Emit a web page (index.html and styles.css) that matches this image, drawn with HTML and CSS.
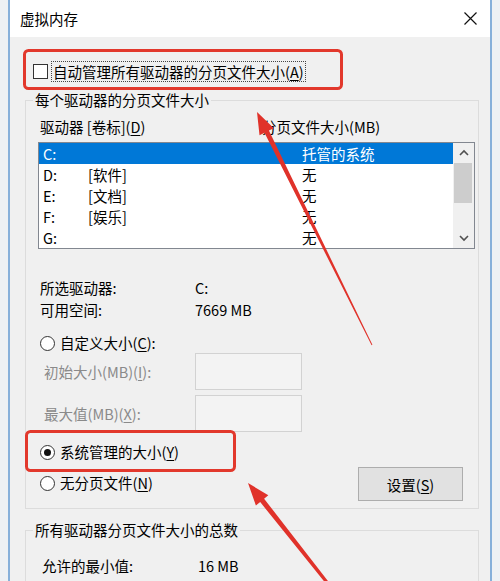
FILE: index.html
```html
<!DOCTYPE html>
<html lang="zh">
<head>
<meta charset="utf-8">
<title>虚拟内存</title>
<link rel="stylesheet" href="styles.css">
</head>
<body>
<div class="window">
  <div class="titlebar">
    <span class="title">虚拟内存</span>
    <svg class="close" width="13" height="13" viewBox="0 0 13 13"><path d="M0.5 0.5L12.5 12.5M12.5 0.5L0.5 12.5" stroke="#111" stroke-width="1.2" fill="none"/></svg>
  </div>
  <div class="auto-row">
    <span class="checkbox"></span>
    <span class="focus">自动管理所有驱动器的分页文件大小(<u>A</u>)</span>
  </div>
  <div class="group g1">
    <div class="group-title">每个驱动器的分页文件大小</div>
    <div class="cols"><span class="h1">驱动器 [卷标](<u>D</u>)</span><span>分页文件大小(MB)</span></div>
    <div class="listbox">
      <div class="rows">
        <div class="row sel"><span class="c1">C:</span><span class="c2"></span><span>托管的系统</span></div>
        <div class="row"><span class="c1">D:</span><span class="c2">[软件]</span><span>无</span></div>
        <div class="row"><span class="c1">E:</span><span class="c2">[文档]</span><span>无</span></div>
        <div class="row"><span class="c1">F:</span><span class="c2">[娱乐]</span><span>无</span></div>
        <div class="row"><span class="c1">G:</span><span class="c2"></span><span>无</span></div>
      </div>
      <div class="scrollbar">
        <div class="sb-btn"><svg width="12" height="12" viewBox="0 0 12 12"><path d="M2 8L6 4L10 8" stroke="#505050" stroke-width="1.6" fill="none"/></svg></div>
        <div class="track"><div class="thumb"></div></div>
        <div class="sb-btn"><svg width="12" height="12" viewBox="0 0 12 12"><path d="M2 4L6 8L10 4" stroke="#505050" stroke-width="1.6" fill="none"/></svg></div>
      </div>
    </div>
    <div class="info">
      <span>所选驱动器:</span><span>C:</span>
      <span>可用空间:</span><span>7669 MB</span>
    </div>
    <div class="radio-row custom"><span class="radio"></span><span>自定义大小(<u>C</u>):</span></div>
    <div class="fields">
      <span class="flabel">初始大小(MB)(<u>I</u>):</span><span class="tb"></span>
      <span class="flabel">最大值(MB)(<u>X</u>):</span><span class="tb"></span>
    </div>
    <div class="bottom">
      <div class="radios">
        <div class="radio-row"><span class="radio on"></span><span>系统管理的大小(<u>Y</u>)</span></div>
        <div class="radio-row"><span class="radio"></span><span>无分页文件(<u>N</u>)</span></div>
      </div>
      <div class="btn">设置(<u>S</u>)</div>
    </div>
  </div>
  <div class="group g2">
    <div class="group-title">所有驱动器分页文件大小的总数</div>
    <div class="total"><span>允许的最小值:</span><span>16 MB</span></div>
  </div>
</div>
<svg class="overlay" width="500" height="581" viewBox="0 0 500 581">
  <rect x="24.5" y="50.5" width="317" height="38" rx="4" fill="none" stroke="#e2382c" stroke-width="3"/>
  <rect x="26.5" y="431.5" width="208" height="39" rx="4" fill="none" stroke="#e2382c" stroke-width="3"/>
  <polygon fill="#e0322a" points="257,112 273.9,128.2 268.9,130.6 372.4,344.8 371.6,345.2 264.5,132.8 259.5,135.2"/>
  <polygon fill="#e0322a" points="248,483 268.3,495.3 264.1,498.7 334.2,589.1 331.8,590.9 260.2,502.1 255.9,505.6"/>
</svg>
</body>
</html>
```

FILE: styles.css
```css
* { box-sizing: border-box; }

html, body { overflow: hidden; }

body {
  margin: 0;
  width: 500px;
  height: 581px;
  position: relative;
  background: #eef1f4;
  font-family: "Noto Sans CJK SC", "Noto Sans", sans-serif;
  font-size: 14.5px;
  color: #000;
}

u { text-underline-offset: 2px; text-decoration-thickness: 1px; }

.window {
  margin-left: 8px;
  width: 484px;
  height: 581px;
  overflow: hidden;
  border-left: 2px solid #87b0da;
  border-right: 2px solid #87b0da;
  background: #f0f0f0;
}

.titlebar {
  height: 37px;
  background: #fff;
  display: flex;
  align-items: center;
  justify-content: space-between;
  padding: 0 13px 0 10px;
}

.title { line-height: 20px; }

.auto-row {
  display: flex;
  align-items: center;
  height: 22px;
  margin: 23px 0 0 23px;
}

.checkbox {
  width: 15px;
  height: 15px;
  border: 1px solid #333;
  background: #fff;
}

.focus {
  margin-left: 3px;
  padding: 0 1px;
  border: 1px dotted #444;
  line-height: 19px;
}

.group {
  margin: 0 11px 0 15px;
  border: 1px solid #dcdcdc;
}

.g1 {
  margin-top: 18px;
  padding-bottom: 7px;
}

.group-title {
  width: fit-content;
  margin: -11px 0 0 7px;
  padding: 0 2px;
  line-height: 20px;
  background: #f0f0f0;
}

.cols {
  display: flex;
  margin-top: 7px;
  padding-left: 14px;
  line-height: 20px;
}

.cols .h1 { width: 222px; }

.listbox {
  margin: 5px 0 0 12px;
  width: 437px;
  height: 107px;
  border: 1px solid #828790;
  background: #fff;
  display: flex;
}

.rows { width: 414px; }

.row {
  height: 21px;
  line-height: 21px;
  display: flex;
  padding-left: 4px;
}

.row.sel { background: #0078d7; color: #fff; }

.c1 { width: 45px; }
.c2 { width: 214px; }

.scrollbar {
  width: 21px;
  display: flex;
  flex-direction: column;
  background: #f0f0f0;
}

.sb-btn {
  height: 20px;
  display: flex;
  align-items: center;
  justify-content: center;
}

.track { flex: 1; }

.thumb {
  margin: 0 2px 0 1px;
  height: 40px;
  background: #cdcdcd;
}

.info {
  display: grid;
  grid-template-columns: 155px auto;
  margin-top: 28px;
  padding-left: 14px;
  line-height: 22px;
}

.radio-row {
  display: flex;
  align-items: center;
  line-height: 20px;
}

.custom {
  margin-top: 12px;
  padding-left: 14px;
}

.radio {
  position: relative;
  width: 15px;
  height: 15px;
  border: 1px solid #333;
  border-radius: 50%;
  background: #fff;
  margin-right: 5px;
}

.radio.on::after {
  content: "";
  position: absolute;
  left: 3px;
  top: 3px;
  width: 7px;
  height: 7px;
  border-radius: 50%;
  background: #111;
}

.fields {
  display: grid;
  grid-template-columns: 151px 107px;
  row-gap: 5px;
  padding-left: 18px;
  color: #8a8a8a;
}

.flabel { align-self: center; line-height: 20px; }

.tb {
  height: 37px;
  border: 1px solid #d2d2d2;
  background: #f3f3f3;
}

.bottom {
  display: flex;
  margin-top: 9px;
  padding: 0 15px 0 14px;
}

.radios {
  display: flex;
  flex-direction: column;
  gap: 9px;
}

.radios .radio-row { line-height: 22px; }

.btn {
  margin-left: auto;
  margin-top: 26px;
  width: 105px;
  height: 34px;
  border: 1px solid #adadad;
  background: #e1e1e1;
  display: flex;
  align-items: center;
  justify-content: center;
}

.g2 {
  margin-top: 21px;
  height: 53px;
}

.total {
  display: grid;
  grid-template-columns: 156px auto;
  margin-top: 15px;
  padding-left: 16px;
  line-height: 22px;
}

.overlay {
  position: absolute;
  left: 0;
  top: 0;
  pointer-events: none;
}
```
